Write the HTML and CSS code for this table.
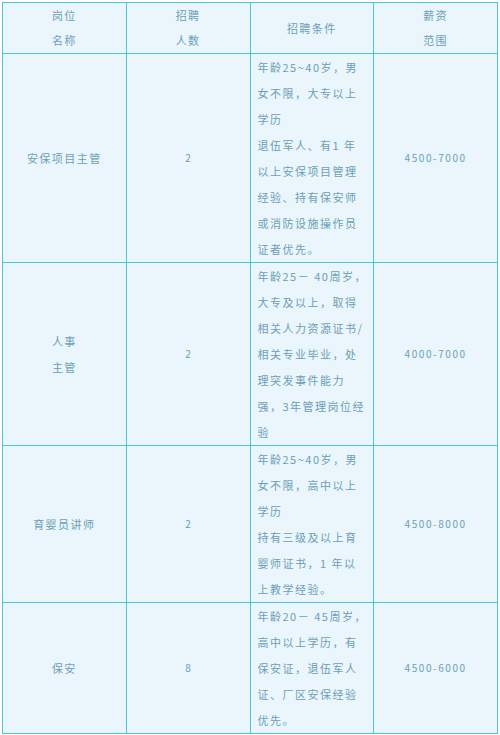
FILE: index.html
```html
<!DOCTYPE html>
<html lang="zh">
<head>
<meta charset="utf-8">
<link rel="stylesheet" href="styles.css">
</head>
<body>
<table class="jobs">
  <colgroup><col><col><col><col></colgroup>
  <thead>
    <tr class="head">
      <th>岗位<br>名称</th>
      <th>招聘<br>人数</th>
      <th>招聘条件</th>
      <th>薪资<br>范围</th>
    </tr>
  </thead>
  <tbody>
    <tr>
      <td class="name">安保项目主管</td>
      <td class="num">2</td>
      <td class="cond">年龄25~40岁，男<br>女不限，大专以上<br>学历<br>退伍军人、有1 年<br>以上安保项目管理<br>经验、持有保安师<br>或消防设施操作员<br>证者优先。</td>
      <td class="pay">4500-7000</td>
    </tr>
    <tr>
      <td class="name">人事<br>主管</td>
      <td class="num">2</td>
      <td class="cond">年龄25－ 40周岁，<br>大专及以上，取得<br>相关人力资源证书/<br>相关专业毕业，处<br>理突发事件能力<br>强，3年管理岗位经<br>验</td>
      <td class="pay">4000-7000</td>
    </tr>
    <tr>
      <td class="name">育婴员讲师</td>
      <td class="num">2</td>
      <td class="cond">年龄25~40岁，男<br>女不限，高中以上<br>学历<br>持有三级及以上育<br>婴师证书，1 年以<br>上教学经验。</td>
      <td class="pay">4500-8000</td>
    </tr>
    <tr>
      <td class="name">保安</td>
      <td class="num">8</td>
      <td class="cond">年龄20－ 45周岁，<br>高中以上学历，有<br>保安证，退伍军人<br>证、厂区安保经验<br>优先。</td>
      <td class="pay">4500-6000</td>
    </tr>
  </tbody>
</table>
</body>
</html>
```
FILE: styles.css
```css
html, body {
  margin: 0;
  padding: 0;
  background: #ffffff;
}

body {
  padding: 2px;
  font-family: "Noto Sans CJK SC", "Noto Sans", sans-serif;
  color: #6c9fb6;
}

.jobs {
  width: 496px;
  table-layout: fixed;
  border-collapse: collapse;
  background: #eaf5fc;
}

.jobs th,
.jobs td {
  border: 1.5px solid #4cc6d6;
  padding: 0;
  text-align: center;
  vertical-align: middle;
  font-size: 11px;
  font-weight: 400;
  line-height: 26px;
  letter-spacing: 1.5px;
}

.head th {
  height: 48px;
  line-height: 25px;
}

.jobs .cond {
  text-align: left;
  padding: 0 5px 0 7px;
  white-space: nowrap;
}

.jobs .num {
  font-size: 10px;
  letter-spacing: 0;
}

.jobs .pay {
  font-size: 10px;
  letter-spacing: 1.6px;
}
```
